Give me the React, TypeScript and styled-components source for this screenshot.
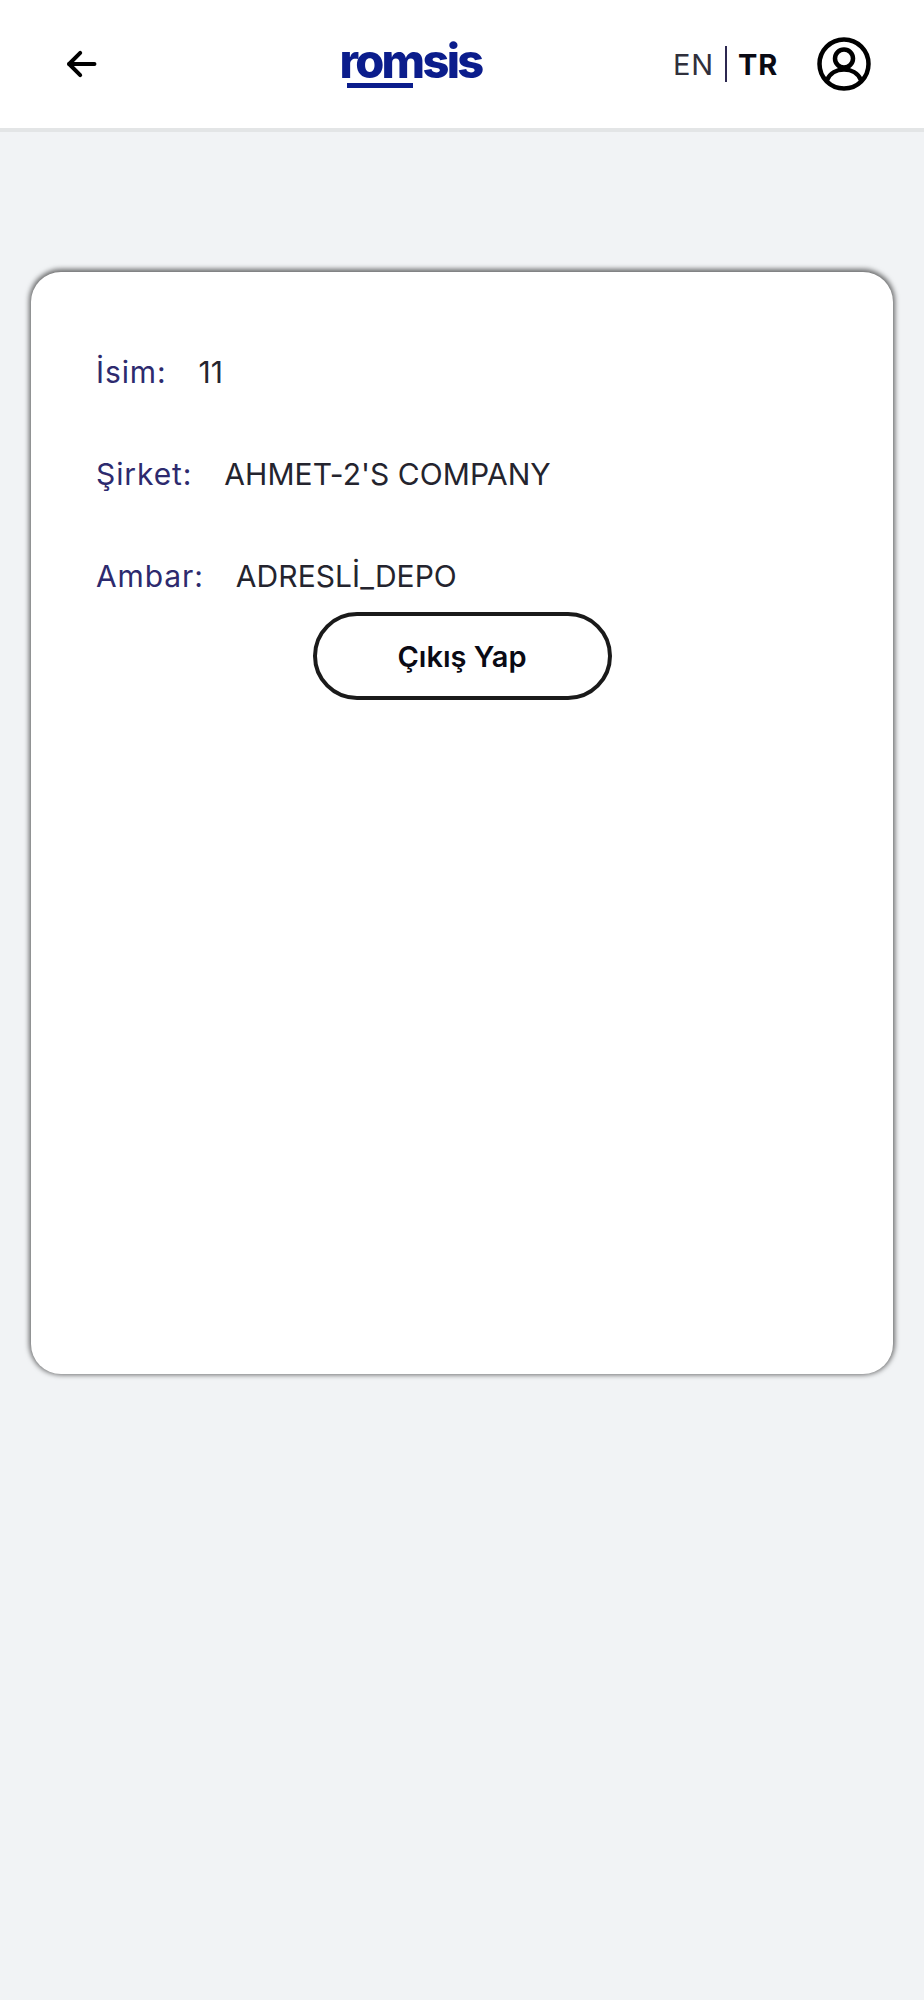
import React from "react";
import styled, { createGlobalStyle } from "styled-components";

const GlobalStyle = createGlobalStyle`
  html, body {
    margin: 0;
    padding: 0;
    background: #f1f3f5;
  }
  body {
    font-family: "Inter", "Liberation Sans", sans-serif;
  }
`;

const rows = [
  { label: "İsim:", value: "11" },
  { label: "Şirket:", value: "AHMET-2'S COMPANY" },
  { label: "Ambar:", value: "ADRESLİ_DEPO" },
];

const App: React.FC = () => {
  return (
    <Page>
      <GlobalStyle />
      <Header>
        <BackBtn aria-label="back">
          <svg width="38" height="38" viewBox="0 0 24 24" fill="none" stroke="#000" strokeWidth="2.5" strokeLinecap="round" strokeLinejoin="round">
            <path d="M20.5 12H4.500" />
            <path d="M11.500 5l-7 7 7 7" />
          </svg>
        </BackBtn>
        <Logo>
          <LogoUnderlined>rom</LogoUnderlined>sis
        </Logo>
        <HeaderRight>
          <Lang>
            <LangItem>EN</LangItem>
            <LangDivider />
            <LangItem $active>TR</LangItem>
          </Lang>
          <svg width="56" height="56" viewBox="0 0 56 56" fill="none" stroke="#000" strokeWidth="4.5">
            <circle cx="28" cy="28" r="24.5" />
            <circle cx="28" cy="22.5" r="9" />
            <path d="M11 44c3-7 10-10.500 17-10.500S42 37 45 44" />
          </svg>
        </HeaderRight>
      </Header>
      <Card>
        {rows.map((row) => (
          <Row key={row.label}>
            <Label>{row.label}</Label>
            <Value>{row.value}</Value>
          </Row>
        ))}
        <LogoutBtn>Çıkış Yap</LogoutBtn>
      </Card>
    </Page>
  );
};

const Page = styled.div`
  min-height: 2000px;
  background: #f1f3f5;
  overflow: hidden;
`;

const Header = styled.header`
  display: flex;
  align-items: center;
  justify-content: space-between;
  box-sizing: border-box;
  height: 132px;
  padding: 0 52px 0 62px;
  background: #fff;
  border-bottom: 4px solid #e3e5e6;
`;

const BackBtn = styled.div`
  display: flex;
  align-items: center;
  width: 38px;
  height: 38px;
`;

const Logo = styled.div`
  margin: 0 0 6px 48px;
  font-family: "Inter", "Liberation Sans", sans-serif;
  font-size: 47px;
  font-weight: 800;
  line-height: 50px;
  letter-spacing: -2.7px;
  color: #0b1d8c;
  filter: blur(0.7px);
`;

const LogoUnderlined = styled.span`
  position: relative;

  &::after {
    content: "";
    position: absolute;
    left: 8px;
    right: 10px;
    bottom: 1px;
    height: 5px;
    background: #0b1d8c;
  }
`;

const HeaderRight = styled.div`
  display: flex;
  align-items: center;
  gap: 38px;
`;

const Lang = styled.div`
  display: flex;
  align-items: center;
  gap: 11px;
`;

const LangItem = styled.span<{ $active?: boolean }>`
  font-size: 29px;
  letter-spacing: 0.8px;
  font-weight: ${(p) => (p.$active ? 700 : 400)};
  color: ${(p) => (p.$active ? "#0a0a14" : "#30303c")};
`;

const LangDivider = styled.span`
  width: 2px;
  height: 36px;
  background: #2c2850;
`;

const Card = styled.main`
  display: flex;
  flex-direction: column;
  box-sizing: border-box;
  height: 1102px;
  margin: 140px 31px 0;
  padding: 78px 65px 0;
  background: #fff;
  border-radius: 30px;
  box-shadow: 0 -1px 5px 2px rgba(0, 0, 0, 0.55);
`;

const Row = styled.div`
  display: flex;
  align-items: center;
  gap: 32px;
  height: 44px;
  margin-bottom: 58px;
  font-size: 30px;

  &:nth-of-type(3) {
    margin-bottom: 14px;
  }
`;

const Label = styled.span`
  letter-spacing: 0.9px;
  color: #2d2a6e;
`;

const Value = styled.span`
  letter-spacing: 0.05px;
  color: #24242e;
`;

const LogoutBtn = styled.button`
  align-self: center;
  box-sizing: border-box;
  width: 299px;
  height: 88px;
  background: #fff;
  border: 4px solid #1a1a1a;
  border-radius: 44px;
  font-family: inherit;
  font-size: 29px;
  font-weight: 600;
  color: #0a0a14;
`;

export default App;
